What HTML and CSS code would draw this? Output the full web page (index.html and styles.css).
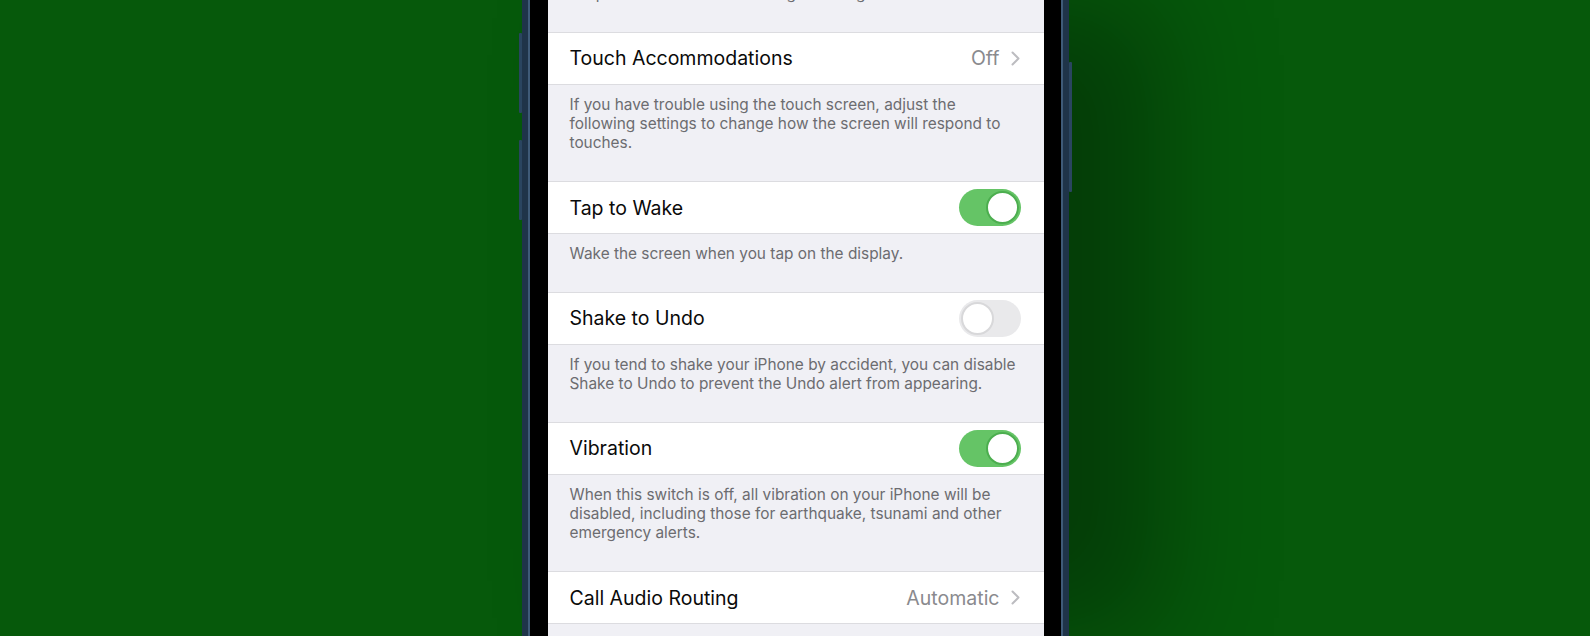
FILE: index.html
```html
<!DOCTYPE html>
<html lang="en">
<head>
    <meta charset="UTF-8">
    <meta name="viewport" content="width=device-width, initial-scale=1.0">
    <title>Touch</title>
    <link rel="stylesheet" href="styles.css">
</head>
<body>

    <!-- 📱 Phone -->
    <div class="stage">
        <div class="phone">
            <span class="side-btn btn-mute"></span>
            <span class="side-btn btn-volume"></span>
            <span class="side-btn btn-power"></span>

            <div class="screen">
                <p class="note">Swipe down on the bottom edge to bring it into reach.</p>

                <div class="row">
                    <span class="label">Touch Accommodations</span>
                    <span class="value">Off
                        <svg class="chevron" width="9" height="15" viewBox="0 0 9 15"><path d="M1.5 1.5 L7.5 7.5 L1.5 13.5" fill="none" stroke="currentColor" stroke-width="2" stroke-linecap="round" stroke-linejoin="round"/></svg>
                    </span>
                </div>
                <p class="note">If you have trouble using the touch screen, adjust the following settings to change how the screen will respond to touches.</p>

                <div class="row">
                    <span class="label">Tap to Wake</span>
                    <span class="switch on"><span class="knob"></span></span>
                </div>
                <p class="note">Wake the screen when you tap on the display.</p>

                <div class="row">
                    <span class="label">Shake to Undo</span>
                    <span class="switch"><span class="knob"></span></span>
                </div>
                <p class="note">If you tend to shake your iPhone by accident, you can disable Shake to Undo to prevent the Undo alert from appearing.</p>

                <div class="row">
                    <span class="label">Vibration</span>
                    <span class="switch on"><span class="knob"></span></span>
                </div>
                <p class="note">When this switch is off, all vibration on your iPhone will be disabled, including those for earthquake, tsunami and other emergency alerts.</p>

                <div class="row">
                    <span class="label">Call Audio Routing</span>
                    <span class="value">Automatic
                        <svg class="chevron" width="9" height="15" viewBox="0 0 9 15"><path d="M1.5 1.5 L7.5 7.5 L1.5 13.5" fill="none" stroke="currentColor" stroke-width="2" stroke-linecap="round" stroke-linejoin="round"/></svg>
                    </span>
                </div>
            </div>
        </div>
    </div>

</body>
</html>
```

FILE: styles.css
```css
/* 🌿 Page */
body {
    margin: 0;
    height: 100vh;
    overflow: hidden;
    background: #06590b;
    font-family: Inter, "Noto Sans", "Liberation Sans", sans-serif;
}
.stage {
    display: flex;
    justify-content: center;
    height: 100%;
}
/* 📱 Phone body */
.phone {
    position: relative;
    width: 496px;
    padding: 0 19px 0 20px;
    background: #000;
    border-left: 6px solid #1f3449;
    border-right: 6px solid #1f3449;
    box-shadow: inset 2px 0 0 #3f5b78, inset -2px 0 0 #3f5b78, 90px 0 110px rgba(0, 0, 0, 0.32);
}
.side-btn {
    position: absolute;
    width: 3px;
    background: #2a4560;
    border-radius: 1px;
}
.btn-mute { left: -9px; top: 33px; height: 80px; }
.btn-volume { left: -9px; top: 140px; height: 80px; }
.btn-power { right: -9px; top: 62px; height: 130px; }
/* ⚙️ Settings list */
.screen {
    height: 100%;
    overflow: hidden;
    background: #f0f0f5;
}
.note {
    margin: 0;
    padding: 10px 26px 28.6px 22px;
    font-size: 15.4px;
    line-height: 19.4px;
    color: #6c6c70;
}
.note:first-child {
    margin-top: -26px;
}
.row {
    display: flex;
    align-items: center;
    justify-content: space-between;
    height: 50.6px;
    padding: 0 23px 0 22px;
    background: #fff;
    border-top: 1px solid #dcdce0;
    border-bottom: 1px solid #dcdce0;
}
.label {
    font-size: 19.5px;
    color: #0a0a0a;
}
.value {
    display: flex;
    align-items: center;
    gap: 11px;
    margin-right: 1px;
    font-size: 19.5px;
    color: #8a8a8e;
}
.chevron {
    color: #bcbcc0;
}
/* 🔘 Switch */
.switch {
    position: relative;
    width: 62px;
    height: 37px;
    border-radius: 19px;
    background: #e9e9eb;
}
.switch .knob {
    position: absolute;
    top: 2px;
    left: 2px;
    width: 29px;
    height: 29px;
    border-radius: 50%;
    background: #fff;
    border: 2px solid #d8d8da;
}
.switch.on {
    background: #65c466;
}
.switch.on .knob {
    left: auto;
    right: 2px;
    border-color: #4cae4f;
}
```
